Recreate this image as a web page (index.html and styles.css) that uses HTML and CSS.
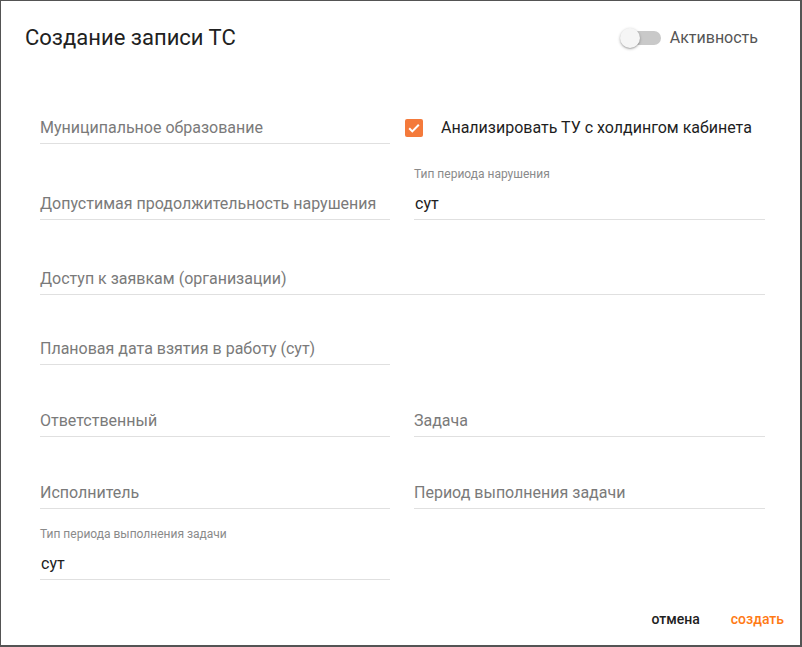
FILE: index.html
```html
<!DOCTYPE html>
<html lang="ru">
<head>
<meta charset="utf-8">
<title>Создание записи ТС</title>
<link rel="stylesheet" href="styles.css">
</head>
<body>
<div class="dialog">
  <header class="dialog-head">
    <h2 class="dialog-title">Создание записи ТС</h2>
    <label class="switch-label">
      <span class="switch"><span class="switch-track"></span><span class="switch-thumb"></span></span>
      <span class="switch-text">Активность</span>
    </label>
  </header>

  <div class="dialog-body">
    <div class="row row-first">
      <div class="field"><span class="placeholder">Муниципальное образование</span></div>
      <label class="check">
        <span class="check-box">
          <svg viewBox="0 0 18 18" width="18" height="18"><path d="M4.2 9.3l3.1 3.1 6.5-6.6" fill="none" stroke="#fff" stroke-width="2"/></svg>
        </span>
        <span class="check-text">Анализировать ТУ с холдингом кабинета</span>
      </label>
    </div>

    <div class="row row-2">
      <div class="field"><span class="placeholder">Допустимая продолжительность нарушения</span></div>
      <div class="field"><span class="field-label">Тип периода нарушения</span><span class="value">сут</span></div>
    </div>

    <div class="row row-3">
      <div class="field field-wide"><span class="placeholder">Доступ к заявкам (организации)</span></div>
    </div>

    <div class="row row-4">
      <div class="field"><span class="placeholder">Плановая дата взятия в работу (сут)</span></div>
    </div>

    <div class="row row-5">
      <div class="field"><span class="placeholder">Ответственный</span></div>
      <div class="field"><span class="placeholder">Задача</span></div>
    </div>

    <div class="row row-6">
      <div class="field"><span class="placeholder">Исполнитель</span></div>
      <div class="field"><span class="placeholder">Период выполнения задачи</span></div>
    </div>

    <div class="row row-7">
      <div class="field"><span class="field-label">Тип периода выполнения задачи</span><span class="value">сут</span></div>
    </div>
  </div>

  <footer class="dialog-actions">
    <button class="btn btn-cancel" type="button">отмена</button>
    <button class="btn btn-submit" type="button">создать</button>
  </footer>
</div>
</body>
</html>
```

FILE: styles.css
```css
* { box-sizing: border-box; }

html, body {
  margin: 0;
  height: 100%;
}

body {
  background: #545454;
  font-family: Roboto, "Noto Sans", Arial, sans-serif;
  color: rgba(0, 0, 0, 0.87);
  overflow: hidden;
}

.dialog {
  margin: 1px 0 0 1px;
  width: 799px;
  height: 644px;
  background: #fff;
  display: flex;
  flex-direction: column;
}

/* header: title + activity switch */
.dialog-head {
  display: flex;
  align-items: center;
  justify-content: space-between;
  padding: 23px 42px 0 24px;
}

.dialog-title {
  margin: 0;
  font-size: 22px;
  line-height: 28px;
  font-weight: 400;
  color: #212121;
}

.switch-label {
  display: flex;
  align-items: center;
  gap: 8px;
}

.switch {
  position: relative;
  width: 42px;
  height: 20px;
}

.switch-track {
  position: absolute;
  left: 4px;
  top: 3px;
  width: 37px;
  height: 14px;
  border-radius: 7px;
  background: #c9c9c9;
}

.switch-thumb {
  position: absolute;
  left: 0;
  top: 0;
  width: 20px;
  height: 20px;
  border-radius: 50%;
  background: #f5f5f5;
  box-shadow: 0 1px 3px rgba(0, 0, 0, 0.3), 0 1px 1px rgba(0, 0, 0, 0.12);
}

.switch-text {
  font-size: 16px;
  line-height: 20px;
  color: #555;
}

/* form grid */
.dialog-body {
  padding: 0 35px 0 39px;
}

.row {
  display: grid;
  grid-template-columns: 350px 351px;
  column-gap: 24px;
}

.row-first { margin-top: 36px; }
.row-2 { margin-top: 20px; }
.row-3 { margin-top: 19px; }
.row-4 { margin-top: 14px; }
.row-5 { margin-top: 16px; }
.row-6 { margin-top: 16px; }
.row-7 { margin-top: 15px; }

.field {
  height: 56px;
  border-bottom: 1px solid #e0e0e0;
  display: flex;
  flex-direction: column;
  padding-bottom: 5px;
}

.field-wide { grid-column: 1 / 3; }

.placeholder,
.value {
  margin-top: auto;
  font-size: 16px;
  line-height: 20px;
}

.placeholder { color: #7a7a7a; }
.value { color: #212121; padding-left: 1px; }

.field-label {
  margin-top: 2px;
  font-size: 12px;
  line-height: 16px;
  color: #8a8a8a;
}

/* checkbox */
.check {
  height: 56px;
  display: flex;
  align-items: flex-end;
  padding-bottom: 7px;
  margin-left: -9px;
  gap: 18px;
}

.check-box {
  width: 18px;
  height: 18px;
  border-radius: 2px;
  background: #f47a3b;
  display: flex;
}

.check-text {
  font-size: 16px;
  line-height: 18px;
  color: #1e1e1e;
}

/* footer buttons */
.dialog-actions {
  margin-top: auto;
  display: flex;
  justify-content: flex-end;
  gap: 15px;
  padding: 8px 8px 10px;
}

.btn {
  border: 0;
  background: none;
  font-family: inherit;
  font-size: 14px;
  line-height: 20px;
  font-weight: 500;
  padding: 6px 8px;
  min-width: 64px;
  cursor: pointer;
}

.btn-cancel { color: #212121; }
.btn-submit { color: #ff7a14; }
```
